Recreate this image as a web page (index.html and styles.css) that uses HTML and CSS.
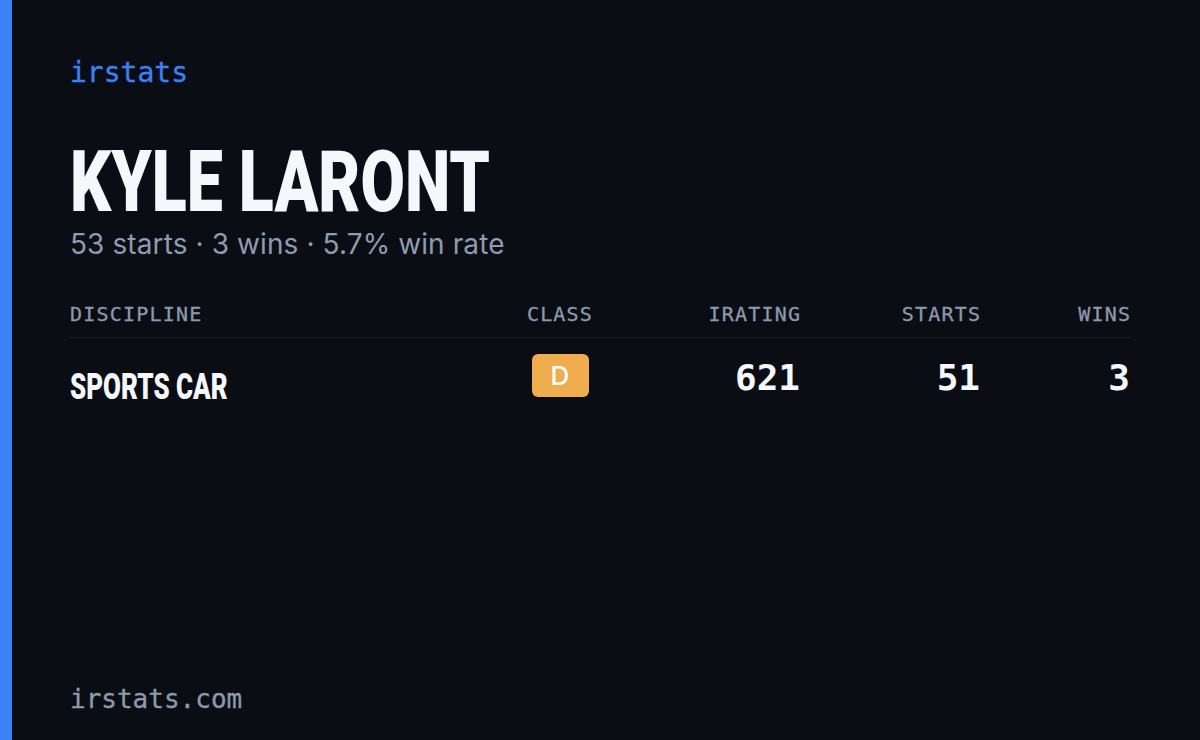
FILE: index.html
```html
<!DOCTYPE html>
<html lang="en">
<head>
<meta charset="utf-8">
<title>irstats – Kyle Laront</title>
<link rel="stylesheet" href="styles.css">
</head>
<body>
<main class="card">
  <div class="brand">irstats</div>
  <h1 class="name"><span class="cond">KYLE LARONT</span></h1>
  <p class="summary">53 starts · 3 wins · 5.7% win rate</p>

  <div class="table">
    <div class="thead">
      <div class="th left">DISCIPLINE</div>
      <div class="th center">CLASS</div>
      <div class="th right">IRATING</div>
      <div class="th right">STARTS</div>
      <div class="th right">WINS</div>
    </div>
    <div class="trow">
      <div class="td discipline"><span class="cond narrow">SPORTS CAR</span></div>
      <div class="td center"><span class="badge">D</span></div>
      <div class="td num">621</div>
      <div class="td num">51</div>
      <div class="td num">3</div>
    </div>
  </div>

  <div class="footer">irstats.com</div>
</main>
</body>
</html>
```

FILE: styles.css
```css
html, body {
  margin: 0;
  padding: 0;
  background: #0a0d14;
}

.card {
  box-sizing: border-box;
  height: 740px;
  border-left: 12px solid #3b82f6;
  padding: 59px 70px 0 58px;
  display: flex;
  flex-direction: column;
  color: #f5f7fa;
}

.brand {
  font-family: "DejaVu Sans Mono", "Liberation Mono", monospace;
  font-size: 28px;
  line-height: 28px;
  color: #3b82f6;
  -webkit-text-stroke: 0.3px #3b82f6;
}

.name {
  margin: 53px 0 0 0;
  height: 84px;
  font-family: Roboto, "Liberation Sans", sans-serif;
  font-weight: 900;
  font-size: 86px;
  line-height: 84px;
  color: #f5f7fa;
  white-space: nowrap;
}

.cond {
  display: inline-block;
  line-height: inherit;
  vertical-align: top;
  transform: scaleX(0.75);
  transform-origin: left center;
}

.cond.narrow {
  transform: scaleX(0.72);
}

.summary {
  margin: 4px 0 0 0;
  font-family: Inter, "Noto Sans", sans-serif;
  font-size: 28px;
  line-height: 32px;
  letter-spacing: 0.1px;
  color: #8e9bb0;
}

.table {
  margin-top: 44px;
}

.thead,
.trow {
  display: grid;
  grid-template-columns: 430px 120px 180px 180px 150px;
}

.thead {
  padding-bottom: 13px;
  border-bottom: 1px solid #1b1e2b;
}

.th {
  font-family: "DejaVu Sans Mono", "Liberation Mono", monospace;
  font-size: 20px;
  line-height: 20px;
  letter-spacing: 1.2px;
  color: #8d99ad;
  -webkit-text-stroke: 0.3px #8d99ad;
}

.left { text-align: left; }
.center { text-align: center; }
.right { text-align: right; margin-right: -1.2px; }

.trow {
  padding-top: 16px;
  align-items: start;
}

.td.discipline {
  font-family: Roboto, "Liberation Sans", sans-serif;
  font-weight: 900;
  font-size: 36px;
  line-height: 36px;
  padding-top: 15px;
  white-space: nowrap;
  color: #f5f7fa;
}

.badge {
  display: inline-flex;
  align-items: center;
  justify-content: center;
  width: 57px;
  height: 43px;
  border-radius: 6px;
  background: #efad50;
  color: #ffffff;
  font-family: Inter, "Noto Sans", sans-serif;
  font-weight: 500;
  font-size: 26px;
}

.td.num {
  font-family: "DejaVu Sans Mono", "Liberation Mono", monospace;
  font-weight: bold;
  font-size: 36px;
  line-height: 43px;
  padding-top: 2px;
  text-align: right;
  color: #f5f7fa;
}

.footer {
  margin-top: auto;
  margin-bottom: 28px;
  font-family: "DejaVu Sans Mono", "Liberation Mono", monospace;
  font-size: 26px;
  line-height: 26px;
  color: #8d99ad;
  -webkit-text-stroke: 0.3px #8d99ad;
}
```
